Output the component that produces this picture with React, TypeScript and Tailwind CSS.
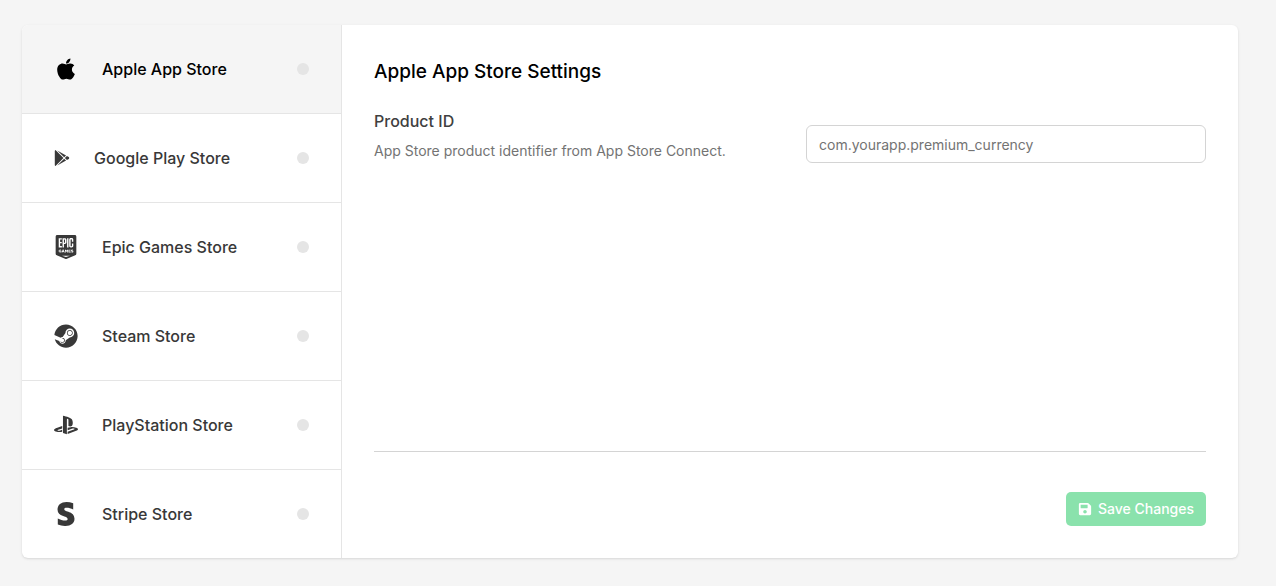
import React from 'react';
import { FaApple, FaGooglePlay, FaPlaystation, FaSave, FaSteam, FaStripeS } from 'react-icons/fa';
import { SiEpicgames } from 'react-icons/si';

const stores = [
  { name: 'Apple App Store', icon: <FaApple size={24} />, active: true },
  { name: 'Google Play Store', icon: <FaGooglePlay size={16} />, active: false },
  { name: 'Epic Games Store', icon: <SiEpicgames size={24} />, active: false },
  { name: 'Steam Store', icon: <FaSteam size={24} />, active: false },
  { name: 'PlayStation Store', icon: <FaPlaystation size={24} />, active: false },
  { name: 'Stripe Store', icon: <FaStripeS size={24} />, active: false },
];

export default function App() {
  return (
    <div className="min-h-screen bg-[#f5f5f5] py-[25px] pr-[38px] pl-[22px] font-['Inter',sans-serif]">
      <main className="flex rounded-md bg-white shadow-sm">
        <nav
          aria-label="Stores"
          className="w-80 shrink-0 divide-y divide-[#e5e5e5] overflow-hidden rounded-l-md border-r border-[#e5e5e5]"
        >
          {stores.map((store) => (
            <button
              key={store.name}
              type="button"
              className={
                store.active
                  ? 'flex w-full items-center gap-6 bg-[#f5f5f5] px-8 py-8 text-left font-medium text-black'
                  : 'flex w-full items-center gap-6 px-8 py-8 text-left font-medium text-[#383838]'
              }
            >
              {store.icon}
              <span className="grow">{store.name}</span>
              <span className="size-3 rounded-full bg-[#e5e5e5]" />
            </button>
          ))}
        </nav>
        <form className="flex min-w-0 grow flex-col p-8">
          <h1 className="text-[19px] leading-[30px] font-medium text-black">Apple App Store Settings</h1>
          <div className="mt-[22px] flex items-center justify-between gap-8">
            <div className="pb-[18px]">
              <label htmlFor="product-id" className="block font-medium text-[#404040]">
                Product ID
              </label>
              <p className="mt-2 text-sm text-[#737373]">App Store product identifier from App Store Connect.</p>
            </div>
            <input
              id="product-id"
              type="text"
              placeholder="com.yourapp.premium_currency"
              className="h-[38px] w-[400px] rounded-md border border-[#d4d4d4] px-3 text-sm placeholder:text-[#737373]"
            />
          </div>
          <div className="mt-auto flex justify-end border-t border-[#d4d4d4] pt-10">
            <button
              type="submit"
              className="flex h-[34px] items-center gap-1.5 rounded-[5px] bg-[#8ae2ac] px-3 text-sm font-medium text-white"
            >
              <FaSave size={14} />
              Save Changes
            </button>
          </div>
        </form>
      </main>
    </div>
  );
}
